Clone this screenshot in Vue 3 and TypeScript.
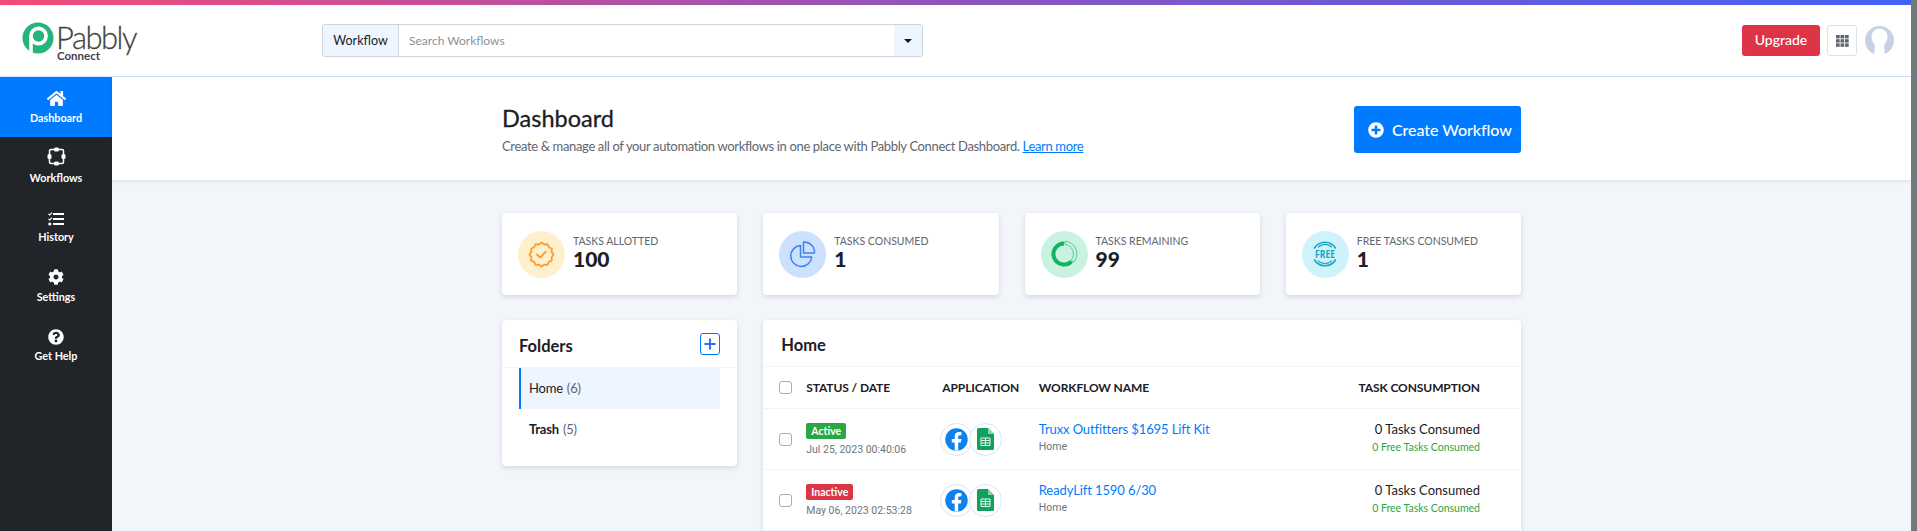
<script setup lang="ts">
interface NavItem {
  label: string
  icon: string
  active?: boolean
}

interface Stat {
  label: string
  value: string
  kind: string
}

interface Workflow {
  status: string
  date: string
  name: string
}

const navItems: NavItem[] = [
  { label: 'Dashboard', icon: 'home', active: true },
  { label: 'Workflows', icon: 'flows' },
  { label: 'History', icon: 'history' },
  { label: 'Settings', icon: 'cog' },
  { label: 'Get Help', icon: 'help' },
]

const stats: Stat[] = [
  { label: 'TASKS ALLOTTED', value: '100', kind: 'allotted' },
  { label: 'TASKS CONSUMED', value: '1', kind: 'consumed' },
  { label: 'TASKS REMAINING', value: '99', kind: 'remaining' },
  { label: 'FREE TASKS CONSUMED', value: '1', kind: 'free' },
]

const workflows: Workflow[] = [
  { status: 'Active', date: 'Jul 25, 2023 00:40:06', name: 'Truxx Outfitters $1695 Lift Kit' },
  { status: 'Inactive', date: 'May 06, 2023 02:53:28', name: 'ReadyLift 1590 6/30' },
]
</script>

<template>
  <div class="shell">
    <div class="main">
      <div class="topline"></div>
      <header class="topbar">
        <div class="logo">
          <svg class="logo-mark" width="32" height="32" viewBox="0 0 32 32">
            <circle cx="16" cy="16" r="15.5" fill="#25b47a" />
            <circle cx="16.5" cy="14" r="7.6" fill="none" stroke="#fff" stroke-width="3.6" />
            <rect x="7.2" y="14" width="3.6" height="18" fill="#fff" />
          </svg>
          <div class="logo-text">
            <span class="logo-name">Pabbly</span>
            <span class="logo-sub">Connect</span>
          </div>
        </div>
        <div class="search">
          <span class="search-type">Workflow</span>
          <span class="search-input">Search Workflows</span>
          <span class="search-caret"><i></i></span>
        </div>
        <div class="top-actions">
          <button class="upgrade">Upgrade</button>
          <button class="apps">
            <svg width="13" height="12" viewBox="0 0 13 12" fill="#5d6670">
              <template v-for="row in 3" :key="row">
                <rect v-for="col in 3" :key="col" :x="(col - 1) * 4.5" :y="(row - 1) * 4.2" width="3.7" height="3.4" />
              </template>
            </svg>
          </button>
          <svg class="avatar" width="29" height="29" viewBox="0 0 29 29">
            <circle cx="14.5" cy="14.5" r="14.5" fill="#c6d1e3" />
            <path d="M14.5 2.5c4.6 0 8 3.6 8 8.5 0 3.4-1.7 5.4-3 7.5-.6 1-.2 3 .3 10.5H9.2c.5-7.5.9-9.5.3-10.5-1.3-2.1-3-4.1-3-7.5 0-4.9 3.4-8.5 8-8.5z" fill="#fff" />
          </svg>
        </div>
      </header>
      <div class="body">
        <nav class="sidebar">
          <a v-for="item in navItems" :key="item.label" class="nav-item" :class="{ active: item.active }">
            <svg v-if="item.icon === 'home'" width="19" height="17" viewBox="0 0 576 512" fill="#fff">
              <path d="M280.37 148.26L96 300.11V464a16 16 0 0 0 16 16l112.06-.29a16 16 0 0 0 15.92-16V368a16 16 0 0 1 16-16h64a16 16 0 0 1 16 16v95.64a16 16 0 0 0 16 16.05L464 480a16 16 0 0 0 16-16V300L295.67 148.26a12.19 12.19 0 0 0-15.3 0zM571.6 251.47L488 182.56V44.05a12 12 0 0 0-12-12h-56a12 12 0 0 0-12 12v72.61L318.47 43a48 48 0 0 0-61 0L4.34 251.47a12 12 0 0 0-1.6 16.9l25.5 31A12 12 0 0 0 45.15 301l235.22-193.74a12.19 12.19 0 0 1 15.3 0L530.9 301a12 12 0 0 0 16.9-1.6l25.5-31a12 12 0 0 0-1.7-16.93z" />
            </svg>
            <svg v-else-if="item.icon === 'flows'" width="19" height="19" viewBox="0 0 19 19" fill="#fff">
              <rect x="2.5" y="2.5" width="14" height="14" rx="1.5" fill="none" stroke="#fff" stroke-width="1.5" />
              <rect x="7" y="0.5" width="5" height="4" rx="1.5" />
              <rect x="7" y="14.5" width="5" height="4" rx="1.5" />
              <rect x="0.5" y="7" width="4" height="5" rx="1.5" />
              <rect x="14.5" y="7" width="4" height="5" rx="1.5" />
            </svg>
            <svg v-else-if="item.icon === 'history'" width="16" height="14" viewBox="0 0 16 14" fill="#fff">
              <rect x="5" y="1" width="11" height="2" />
              <rect x="5" y="6" width="11" height="2" />
              <rect x="5" y="11" width="11" height="2" />
              <path d="M.5 1.8l1.2 1.2L4 .6M.5 6.8L1.7 8 4 5.6" fill="none" stroke="#fff" stroke-width="1.1" />
              <circle cx="1.8" cy="12" r="1.6" />
            </svg>
            <svg v-else-if="item.icon === 'cog'" width="16" height="16" viewBox="0 0 512 512" fill="#fff">
              <path d="M487.4 315.7l-42.6-24.6c4.3-23.2 4.3-47 0-70.2l42.6-24.6c4.9-2.8 7.1-8.6 5.5-14-11.1-35.6-30-67.8-54.7-94.6-3.8-4.1-10-5.1-14.8-2.3L380.8 110c-17.9-15.4-38.5-27.3-60.8-35.1V25.8c0-5.6-3.9-10.5-9.4-11.7-36.7-8.2-74.3-7.8-109.2 0-5.5 1.2-9.4 6.1-9.4 11.7V75c-22.2 7.9-42.8 19.8-60.8 35.1L88.7 85.5c-4.9-2.8-11-1.9-14.8 2.3-24.7 26.7-43.6 58.9-54.7 94.6-1.7 5.4.6 11.2 5.5 14L67.3 221c-4.3 23.2-4.3 47 0 70.2l-42.6 24.6c-4.9 2.8-7.1 8.6-5.5 14 11.1 35.6 30 67.8 54.7 94.6 3.8 4.1 10 5.1 14.8 2.3l42.6-24.6c17.9 15.4 38.5 27.3 60.8 35.1v49.2c0 5.6 3.9 10.5 9.4 11.7 36.7 8.2 74.3 7.8 109.2 0 5.5-1.2 9.4-6.1 9.4-11.7v-49.2c22.2-7.9 42.8-19.8 60.8-35.1l42.6 24.6c4.9 2.8 11 1.9 14.8-2.3 24.7-26.7 43.6-58.9 54.7-94.6 1.5-5.5-.7-11.3-5.6-14.1zM256 336c-44.1 0-80-35.9-80-80s35.9-80 80-80 80 35.9 80 80-35.9 80-80 80z" />
            </svg>
            <svg v-else width="16" height="16" viewBox="0 0 512 512" fill="#fff">
              <path d="M504 256c0 136.997-111.043 248-248 248S8 392.997 8 256C8 119.083 119.043 8 256 8s248 111.083 248 248zM262.655 90c-54.497 0-89.255 22.957-116.549 63.758-3.536 5.286-2.353 12.415 2.715 16.258l34.699 26.31c5.205 3.947 12.621 3.008 16.665-2.122 17.864-22.658 30.113-35.797 57.303-35.797 20.429 0 45.698 13.148 45.698 32.958 0 14.976-12.363 22.667-32.534 33.976C247.128 238.528 216 254.941 216 296v4c0 6.627 5.373 12 12 12h56c6.627 0 12-5.373 12-12v-1.333c0-28.462 83.186-29.647 83.186-106.667 0-58.002-60.165-102-116.531-102zM256 338c-25.365 0-46 20.635-46 46 0 25.364 20.635 46 46 46s46-20.636 46-46c0-25.365-20.635-46-46-46z" />
            </svg>
            <span>{{ item.label }}</span>
          </a>
        </nav>
        <div class="content">
          <section class="page-head">
            <div class="wrap head-row">
              <div>
                <h1>Dashboard</h1>
                <p>Create &amp; manage all of your automation workflows in one place with Pabbly Connect Dashboard. <a>Learn more</a></p>
              </div>
              <button class="create">
                <svg width="16" height="16" viewBox="0 0 512 512" fill="#fff">
                  <path d="M256 8C119 8 8 119 8 256s111 248 248 248 248-111 248-248S393 8 256 8zm144 276c0 6.6-5.4 12-12 12h-92v92c0 6.6-5.4 12-12 12h-56c-6.6 0-12-5.4-12-12v-92h-92c-6.6 0-12-5.4-12-12v-56c0-6.6 5.4-12 12-12h92v-92c0-6.6 5.4-12 12-12h56c6.6 0 12 5.4 12 12v92h92c6.6 0 12 5.4 12 12v56z" />
                </svg>
                Create Workflow
              </button>
            </div>
          </section>
          <div class="wrap grid">
            <div v-for="stat in stats" :key="stat.label" class="card stat">
              <span class="stat-icon" :class="stat.kind">
                <svg v-if="stat.kind === 'allotted'" width="27" height="27" viewBox="0 0 26 26" fill="none" stroke="#f9a12e" stroke-width="1.8">
                  <path d="M13 1.5l2.6 1.9 3.2-.3 1.3 2.9 2.9 1.3-.3 3.2 1.9 2.5-1.9 2.6.3 3.2-2.9 1.3-1.3 2.9-3.2-.3-2.6 1.9-2.6-1.9-3.2.3-1.3-2.9-2.9-1.3.3-3.2L1.4 13l1.9-2.5-.3-3.2 2.9-1.3 1.3-2.9 3.2.3z" stroke-linejoin="round" />
                  <path d="M8.7 13l3 3 5.5-5.7" stroke-linecap="round" stroke-linejoin="round" />
                </svg>
                <svg v-else-if="stat.kind === 'consumed'" width="26" height="29" viewBox="0 0 26 29" fill="none" stroke="#3f83ec" stroke-width="1.5">
                  <path d="M10.5 5.5A10.5 10.5 0 1 0 21.7 17H10.5z" stroke-linejoin="round" />
                  <path d="M13.5 2a10.5 10.5 0 0 1 11 11h-11z" stroke-linejoin="round" />
                </svg>
                <svg v-else-if="stat.kind === 'remaining'" width="28" height="28" viewBox="0 0 28 28" fill="none">
                  <path d="M14 3.5a10.5 10.5 0 1 0 7.5 17.8" stroke="#10b461" stroke-width="4" />
                  <path d="M15 1.2c6.6.6 11.8 6 11.8 12.8 0 3.1-1 5.9-2.8 8.1l-2.7-2.2c1.3-1.7 2.1-3.7 2.1-5.9 0-4.9-3.5-9-8.4-9.6z" stroke="#4fcb8d" stroke-width="1" />
                </svg>
                <svg v-else width="28" height="28" viewBox="0 0 28 28" fill="none" stroke="#17a5c6">
                  <path d="M3.2 8.5A12.5 12.5 0 0 1 24.8 8.5M24.8 19.5A12.5 12.5 0 0 1 3.2 19.5" stroke-width="1.6" />
                  <path d="M7 7.5A9.5 9.5 0 0 1 21 7.5M21 20.5A9.5 9.5 0 0 1 7 20.5" stroke-width="1.1" />
                  <text x="14" y="18" text-anchor="middle" textLength="20" lengthAdjust="spacingAndGlyphs" class="free-text">FREE</text>
                </svg>
              </span>
              <div class="stat-text">
                <span class="stat-label">{{ stat.label }}</span>
                <strong class="stat-value">{{ stat.value }}</strong>
              </div>
            </div>

            <aside class="card folders">
              <div class="folders-head">
                <h2>Folders</h2>
                <button class="add-folder">
                  <svg width="12" height="12" viewBox="0 0 12 12"><path d="M6 .5v11M.5 6h11" stroke="#2f6bf2" stroke-width="2" /></svg>
                </button>
              </div>
              <ul>
                <li class="current">Home <em>(6)</em></li>
                <li><b>Trash</b> <em>(5)</em></li>
              </ul>
            </aside>

            <section class="card table-card">
              <h2>Home</h2>
              <div class="row table-head">
                <span class="check"></span>
                <span>STATUS / DATE</span>
                <span>APPLICATION</span>
                <span>WORKFLOW NAME</span>
                <span class="right">TASK CONSUMPTION</span>
              </div>
              <div v-for="flow in workflows" :key="flow.name" class="row flow">
                <span class="check"></span>
                <div class="status">
                  <span class="badge" :class="flow.status.toLowerCase()">{{ flow.status }}</span>
                  <small>{{ flow.date }}</small>
                </div>
                <div class="apps-cell">
                  <span class="app-ring">
                    <svg width="23" height="23" viewBox="0 0 23 23">
                      <circle cx="11.5" cy="11.5" r="11.2" fill="#0c82ee" />
                      <path d="M9.7 22.6v-8.2H6.8V11h2.9V8.6c0-2.9 1.7-4.5 4.3-4.5 1.3 0 2.5.2 2.5.2v2.9h-1.4c-1.4 0-1.9.9-1.9 1.8V11h3.2l-.5 3.4h-2.7v8.2z" fill="#fff" />
                    </svg>
                  </span>
                  <span class="app-ring second">
                    <svg width="17" height="22" viewBox="0 0 17 22">
                      <path d="M1.5 0H11l6 6v14.5a1.5 1.5 0 0 1-1.5 1.5h-14A1.5 1.5 0 0 1 0 20.5v-19A1.5 1.5 0 0 1 1.5 0z" fill="#12a05c" />
                      <path d="M11 0l6 6h-6z" fill="#8ed1b1" />
                      <path d="M4 10h9v7.5H4zM4 12.5h9M4 15h9M8.5 10v7.5" fill="none" stroke="#e4f4ec" stroke-width="1" />
                    </svg>
                  </span>
                </div>
                <div class="flow-name">
                  <a>{{ flow.name }}</a>
                  <small>Home</small>
                </div>
                <div class="right usage">
                  <span>0 Tasks Consumed</span>
                  <small>0 Free Tasks Consumed</small>
                </div>
              </div>
            </section>
          </div>
        </div>
      </div>
    </div>
    <div class="scrollbar"></div>
  </div>
</template>

<style>
html,
body {
  margin: 0;
  overflow: hidden;
}
</style>

<style scoped>
.shell {
  display: flex;
  height: 531px;
  overflow: hidden;
  font-family: Lato, "Open Sans", sans-serif;
  color: #1c2026;
}

.main {
  flex: 1;
  min-width: 0;
  display: flex;
  flex-direction: column;
}

.scrollbar {
  width: 6px;
  background: #74787d;
}

.topline {
  height: 5px;
  flex: none;
  background: linear-gradient(90deg, #f44b78 0%, #8d54bc 50%, #4261f6 100%);
}

.topbar {
  height: 72px;
  flex: none;
  box-sizing: border-box;
  display: flex;
  align-items: center;
  background: #fff;
  border-bottom: 1px solid #d3e2fb;
}

.logo {
  width: 322px;
  flex: none;
  align-self: flex-start;
  display: flex;
  gap: 2px;
  padding: 17px 0 0 22px;
  box-sizing: border-box;
}

.logo-text {
  display: flex;
  flex-direction: column;
  color: #434343;
  margin-top: 2px;
}

.logo-name {
  font-size: 31px;
  font-weight: 300;
  line-height: 26px;
  letter-spacing: -1.5px;
  -webkit-text-stroke: 0.3px #434343;
}

.logo-sub {
  font-size: 11.5px;
  font-weight: 700;
  line-height: 11px;
  margin-left: 1px;
}

.search {
  width: 601px;
  height: 33px;
  display: flex;
  box-sizing: border-box;
  border: 1px solid #ced4de;
  border-radius: 3px;
  font-size: 12.5px;
  overflow: hidden;
}

.search-type {
  width: 75px;
  background: #edf5fe;
  border-right: 1px solid #ced4de;
  display: flex;
  align-items: center;
  justify-content: center;
}

.search-input {
  flex: 1;
  display: flex;
  align-items: center;
  padding-left: 10px;
  color: #8c9196;
  font-size: 12px;
}

.search-caret {
  width: 28px;
  background: #edf5fe;
  display: flex;
  align-items: center;
  justify-content: center;
}

.search-caret i {
  width: 0;
  height: 0;
  border: 4px solid transparent;
  border-top: 4px solid #16181b;
  margin-top: 4px;
}

.top-actions {
  margin-left: auto;
  display: flex;
  align-items: center;
  padding-right: 17px;
}

.upgrade {
  width: 78px;
  height: 31px;
  border: 0;
  border-radius: 3px;
  background: #de3447;
  color: #fff;
  font: 500 14px Lato, sans-serif;
  padding: 0 0 2px;
}

.apps {
  width: 30px;
  height: 31px;
  margin-left: 7px;
  border: 1px solid #dde2ea;
  border-radius: 3px;
  background: #fff;
  display: flex;
  align-items: center;
  justify-content: center;
  padding: 0;
}

.avatar {
  margin-left: 8px;
}

.body {
  flex: 1;
  min-height: 0;
  display: flex;
}

.sidebar {
  width: 112px;
  flex: none;
  background: #212529;
}

.nav-item {
  height: 59.5px;
  display: flex;
  flex-direction: column;
  align-items: center;
  justify-content: flex-end;
  gap: 4.4px;
  padding-bottom: 13px;
  box-sizing: border-box;
  color: #fff;
  font-size: 10.8px;
  font-weight: 700;
}

.nav-item.active {
  background: #007bff;
  height: 60px;
}

.content {
  flex: 1;
  min-width: 0;
  background: #f2f5f9;
}

.wrap {
  width: 1019px;
  margin: 0 auto;
}

.page-head {
  height: 103px;
  background: #fff;
  box-shadow: 0 1px 4px rgba(40, 50, 70, 0.12);
}

.head-row {
  height: 100%;
  display: flex;
  align-items: flex-start;
  justify-content: space-between;
}

h1 {
  margin: 25px 0 0;
  font-size: 23.5px;
  line-height: 33px;
  font-weight: 400;
  -webkit-text-stroke: 0.3px #1c2026;
}

.page-head p {
  margin: 1px 0 0;
  font-size: 13px;
  line-height: 20px;
  letter-spacing: -0.35px;
  color: #5e666f;
}

.page-head p a {
  color: #007bff;
  text-decoration: underline;
}

.create {
  margin-top: 29px;
  width: 167px;
  height: 47px;
  border: 0;
  border-radius: 3px;
  background: #007bff;
  color: #fff;
  font: 500 16px Lato, sans-serif;
  letter-spacing: -0.05px;
  display: flex;
  align-items: center;
  gap: 8px;
  padding: 0 0 0 14px;
}

.grid {
  display: grid;
  grid-template-columns: repeat(4, 1fr);
  column-gap: 26px;
  row-gap: 25px;
  padding-top: 33px;
}

.card {
  background: #fff;
  border-radius: 4px;
  box-shadow: 0 2px 5px rgba(60, 70, 90, 0.16);
}

.stat {
  height: 82px;
  display: flex;
  align-items: center;
  padding-left: 16px;
  gap: 8px;
}

.stat-icon {
  width: 47px;
  height: 47px;
  flex: none;
  border-radius: 50%;
  display: flex;
  align-items: center;
  justify-content: center;
}

.allotted {
  background: #fff0cd;
}

.consumed {
  background: #cce1fe;
}

.remaining {
  background: #c9f3e0;
}

.free {
  background: #cff3fb;
}

.free-text {
  font: 700 10px "Open Sans", sans-serif;
  fill: #17a5c6;
  stroke: none;
}

.stat-text {
  display: flex;
  flex-direction: column;
  margin-top: -5px;
}

.stat-label {
  font-size: 10.5px;
  line-height: 14px;
  color: #5e666f;
}

.stat-value {
  font-size: 21px;
  line-height: 21px;
  font-weight: 900;
}

.folders {
  height: 146px;
  align-self: start;
}

.folders-head {
  height: 48px;
  box-sizing: border-box;
  padding: 0 17px;
  display: flex;
  align-items: center;
  justify-content: space-between;
  border-bottom: 1px solid #eef4fd;
}

.folders-head h2 {
  margin-top: 4px;
}

h2 {
  margin: 0;
  font-size: 16.5px;
  font-weight: 700;
}

.add-folder {
  width: 20px;
  height: 22px;
  border: 1px solid #007bff;
  border-radius: 3px;
  background: #fff;
  padding: 0;
  display: flex;
  align-items: center;
  justify-content: center;
}

.folders ul {
  list-style: none;
  margin: 0 17px;
  padding: 0;
}

.folders li {
  height: 41px;
  box-sizing: border-box;
  display: flex;
  align-items: center;
  gap: 4px;
  padding: 0 0 2px 10px;
  font-size: 13px;
  letter-spacing: -0.2px;
}

.folders li em {
  font-style: normal;
  color: #5e666f;
}

.folders li.current {
  background: #edf5fe;
  border-left: 2px solid #007bff;
  padding-left: 8px;
}

.table-card {
  grid-column: span 3;
  height: 240px;
}

.table-card h2 {
  height: 47px;
  box-sizing: border-box;
  line-height: 50px;
  padding-left: 18px;
  border-bottom: 1px solid #eef4fd;
}

.row {
  display: grid;
  grid-template-columns: 27px 136px 96.5px 1fr 1fr;
  align-items: center;
  box-sizing: border-box;
  padding: 0 41px 0 16px;
  border-bottom: 1px solid #eef4fd;
}

.table-head {
  height: 42px;
  font-size: 12px;
  font-weight: 700;
  letter-spacing: -0.1px;
}

.flow {
  height: 61px;
}

.right {
  text-align: right;
  justify-self: end;
}

.check {
  width: 13px;
  height: 13px;
  border: 1px solid #a9aeb5;
  border-radius: 3px;
  box-sizing: border-box;
}

.status,
.flow-name,
.usage {
  display: flex;
  flex-direction: column;
}

.status {
  align-items: flex-start;
  gap: 3px;
  margin-top: 2px;
}

.badge {
  height: 16px;
  line-height: 16px;
  padding: 0 5px;
  border-radius: 2px;
  color: #fff;
  font-size: 10.5px;
  font-weight: 700;
}

.active {
  background: #28a745;
}

.inactive {
  background: #dc3545;
}

small {
  font-family: Roboto, sans-serif;
  font-size: 10.5px;
  line-height: 16px;
  color: #6c757d;
}

.apps-cell {
  display: flex;
  margin-left: -2px;
}

.app-ring {
  width: 33px;
  height: 33px;
  border: 1px solid #d6e4fb;
  border-radius: 50%;
  box-sizing: border-box;
  background: #fff;
  display: flex;
  align-items: center;
  justify-content: center;
}

.second {
  margin-left: -4px;
}

.flow-name,
.usage {
  margin-top: -5px;
}

.flow-name a {
  color: #007bff;
  font-size: 13px;
  line-height: 20px;
  letter-spacing: -0.1px;
}

.usage {
  font-size: 13px;
  line-height: 20px;
}

.usage small {
  color: #28a745;
  font-family: Lato, sans-serif;
}
</style>
